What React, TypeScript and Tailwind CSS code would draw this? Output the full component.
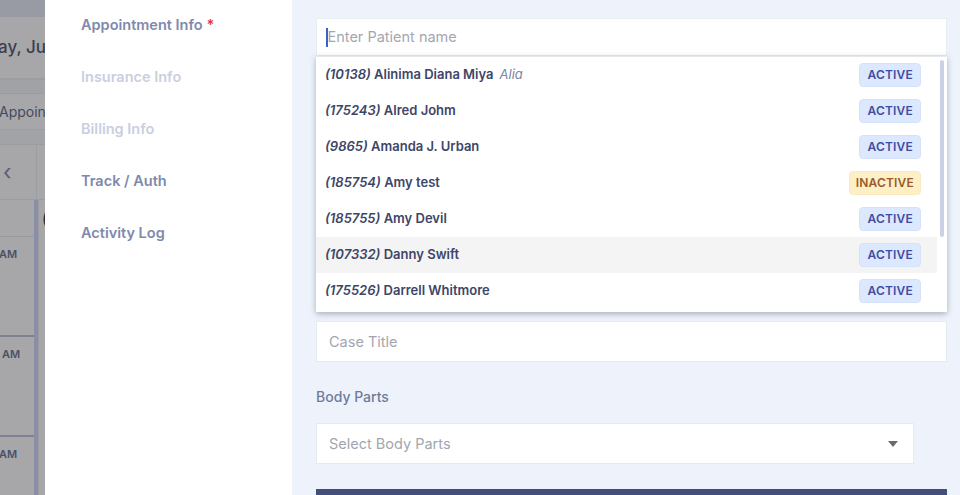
import type { ReactElement } from "react";

type Patient = {
  id: string;
  name: string;
  alias?: string;
  active: boolean;
};

const patients: Patient[] = [
  { id: "10138", name: "Alinima Diana Miya", alias: "Alia", active: true },
  { id: "175243", name: "Alred Johm", active: true },
  { id: "9865", name: "Amanda J. Urban", active: true },
  { id: "185754", name: "Amy test", active: false },
  { id: "185755", name: "Amy Devil", active: true },
  { id: "107332", name: "Danny Swift", active: true },
  { id: "175526", name: "Darrell Whitmore", active: true },
];

const menu = [
  { label: "Appointment Info", required: true, enabled: true },
  { label: "Insurance Info", enabled: false },
  { label: "Billing Info", enabled: false },
  { label: "Track / Auth", enabled: true },
  { label: "Activity Log", enabled: true },
];

// Page that sits behind the drawer, only the left strip shows
function Backdrop(): ReactElement {
  return (
    <div className="flex h-full w-full flex-col bg-[#a7a7a9] text-[#3b3f52]">
      <div className="h-[17px] shrink-0 bg-[#989ba3]" />
      <div className="flex h-[61px] shrink-0 items-center whitespace-nowrap text-[17px] font-medium">
        <span className="-ml-[2px]">ay, Ju</span>
      </div>
      <div className="h-[2px] shrink-0 bg-[#9c9da2]" />
      <div className="h-[13px] shrink-0 bg-[#a1a2a6]" />
      <div className="flex h-[37px] shrink-0 items-center whitespace-nowrap border-y border-[#9b9ca1] text-[14px] text-[#444a5f]">
        <span className="-ml-[1px]">Appointment</span>
      </div>
      <div className="h-[14px] shrink-0 bg-[#a2a3a7]" />
      <div className="flex h-[56px] shrink-0 items-center border-y border-[#9b9ca1]">
        <span className="w-[37px] border-r border-[#9c9da3] pl-[3px] text-[22px] leading-[54px] text-[#585d70]">
          ‹
        </span>
      </div>
      <div className="flex flex-1">
        <div className="flex w-[34px] shrink-0 flex-col">
          <div className="h-[37px] shrink-0 border-b border-[#9a9ba0]" />
          {["AM", "AM", "AM"].map((t, i) => (
            <div
              key={i}
              className="flex h-[100px] shrink-0 flex-col border-b-2 border-[#7f8295] pt-[9px] text-[11px] font-semibold text-[#4b5068]"
            >
              <span className={i === 1 ? "pl-[2px]" : "-ml-[1px]"}>{t}</span>
            </div>
          ))}
        </div>
        <div className="w-[4px] shrink-0 bg-[#8a8ea6]" />
        <div className="flex-1 border-l border-[#9a9ba0]">
          <div className="flex h-[37px] items-center pl-[3px] text-[18px] font-bold text-[#2c2f3d]">(</div>
        </div>
      </div>
    </div>
  );
}

function Badge({ active }: { active: boolean }): ReactElement {
  return active ? (
    <span className="rounded-[4px] border border-[#d4e3fb] bg-[#dce8fd] px-[7px] py-[2px] text-[12px] font-semibold tracking-[0.2px] text-[#3f4ea3]">
      ACTIVE
    </span>
  ) : (
    <span className="rounded-[4px] border border-[#fbeac0] bg-[#fdf0c6] px-[6px] py-[2px] text-[12px] font-semibold tracking-[0.2px] text-[#9a5a2c]">
      INACTIVE
    </span>
  );
}

function PatientDropdown(): ReactElement {
  return (
    <div className="absolute left-0 right-0 top-[38px] z-10 flex h-[256px] border-t border-[#e6e8ec] bg-white shadow-[0_2px_6px_rgba(40,45,70,0.35)]">
      <ul className="flex-1">
        {patients.map((p, i) => (
          <li
            key={p.id}
            className={`flex h-9 items-center justify-between pl-[9px] pr-[16px] ${
              i === 5 ? "bg-[#f4f4f4]" : ""
            }`}
          >
            <span className="text-[13px] font-semibold text-[#3e4667]">
              <span className="italic">({p.id})</span> {p.name}
              {p.alias && (
                <span className="ml-[6px] font-normal italic text-[#7b85a3]">{p.alias}</span>
              )}
            </span>
            <Badge active={p.active} />
          </li>
        ))}
      </ul>
      <div className="w-[10px] pt-[3px]">
        <div className="ml-[3px] h-[177px] w-[4px] rounded-full bg-[#cbd2e6]" />
      </div>
    </div>
  );
}

export default function App(): ReactElement {
  return (
    <div
      className="relative h-[495px] w-[960px] overflow-hidden"
      style={{ fontFamily: "Inter, 'Noto Sans', sans-serif" }}
    >
      <Backdrop />

      {/* Drawer */}
      <div className="absolute bottom-0 left-[45px] right-0 top-0 flex">
        <aside className="w-[247px] bg-white pl-[36px] pt-[15px]">
          <nav className="flex flex-col">
            {menu.map((m) => (
              <div
                key={m.label}
                className={`h-[52px] text-[14.5px] font-semibold leading-[20px] ${
                  m.enabled ? "text-[#7e89ac]" : "text-[#c9cfdf]"
                }`}
              >
                {m.label}
                {m.required && <span className="ml-[4px] text-[#e5373a]">*</span>}
              </div>
            ))}
          </nav>
        </aside>

        <main className="flex-1 bg-[#eef3fb] pl-[24px] pr-[13px] pt-[18px]">
          <div className="relative">
            <div className="flex h-[38px] items-center border border-[#e8ecf3] bg-white pl-[9px]">
              <span className="h-[19px] w-[1.5px] bg-[#3466c9]" />
              <span className="text-[14.5px] text-[#a3a7b1]">Enter Patient name</span>
            </div>
            <PatientDropdown />
          </div>

          <div className="mt-[265px] flex h-[41px] items-center border border-[#e6ebf3] bg-white pl-[12px] text-[14.5px] text-[#a2a6b0]">
            Case Title
          </div>

          <div className="mt-[24px] text-[14px] font-medium text-[#6f7b9b]">Body Parts</div>

          <div className="mt-[16px] flex h-[41px] w-[598px] items-center justify-between border border-[#e6ebf3] bg-white pl-[12px] pr-[15px] text-[14.5px] text-[#a2a6b0]">
            <span>Select Body Parts</span>
            <svg width="10" height="6" viewBox="0 0 10 6">
              <path d="M0 0h10L5 6z" fill="#6b6b6b" />
            </svg>
          </div>

          <div className="mt-[25px] h-[10px] bg-[#434f7a]" />
        </main>
      </div>
    </div>
  );
}
